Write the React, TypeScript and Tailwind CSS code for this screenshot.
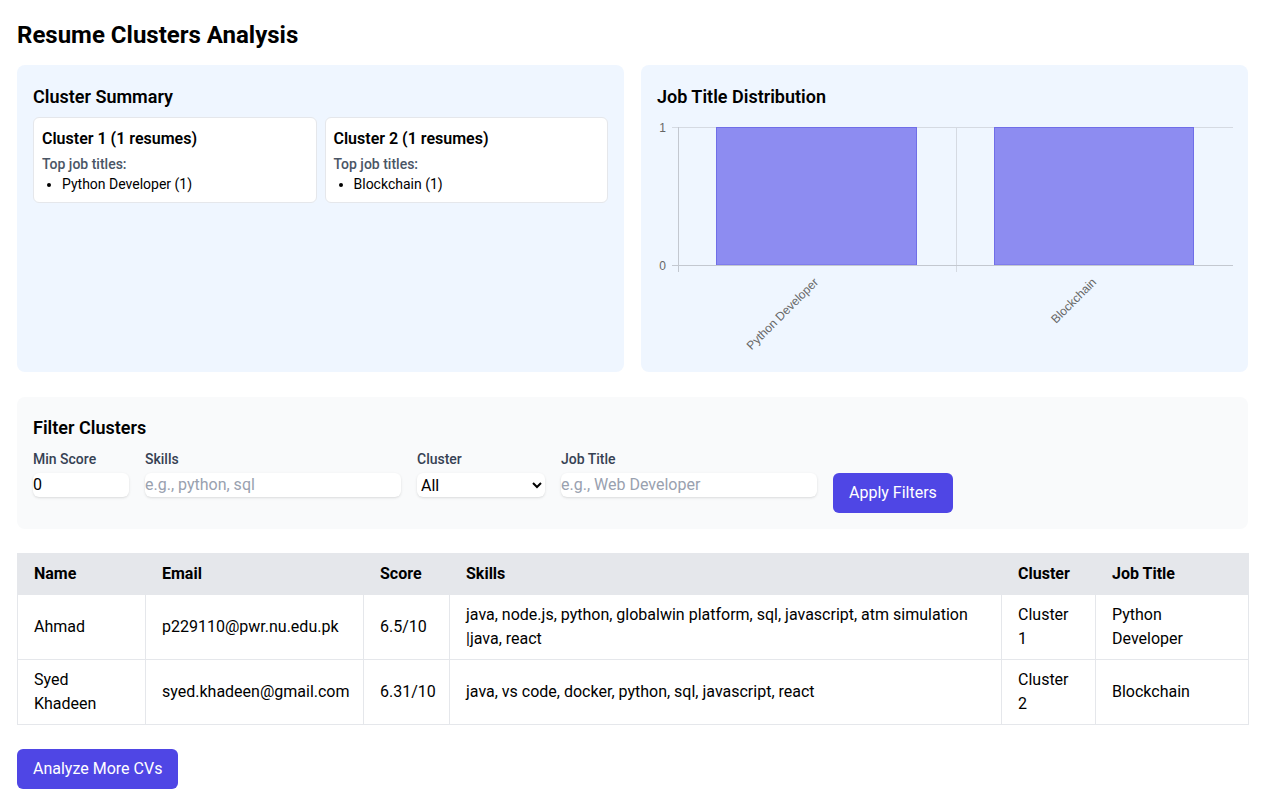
import React from "react";

const font = { fontFamily: "Roboto, 'Noto Sans', sans-serif" };

function Chart() {
  const grid = "#d5dae2";
  const axis = "#c3c8d0";
  return (
    <svg width="576" height="239" viewBox="0 0 576 239" className="block">
      <line x1="15" y1="10.5" x2="576" y2="10.5" stroke={grid} strokeWidth="1" />
      <line x1="299.5" y1="10" x2="299.5" y2="155" stroke={grid} strokeWidth="1" />
      <rect x="59.5" y="10.5" width="200" height="137.5" fill="rgba(100,96,235,0.7)" stroke="rgb(112,110,232)" strokeWidth="1" />
      <rect x="337.5" y="10.5" width="199" height="137.5" fill="rgba(100,96,235,0.7)" stroke="rgb(112,110,232)" strokeWidth="1" />
      <line x1="21.5" y1="10" x2="21.5" y2="155" stroke={axis} strokeWidth="1" />
      <line x1="15" y1="148.5" x2="576" y2="148.5" stroke={axis} strokeWidth="1" />
      <text x="9" y="14.5" textAnchor="end" fontSize="12" fill="#666" fontFamily="'Liberation Sans', Arial, sans-serif">1</text>
      <text x="9" y="152.5" textAnchor="end" fontSize="12" fill="#666" fontFamily="'Liberation Sans', Arial, sans-serif">0</text>
      <text x="162" y="166" textAnchor="end" fontSize="12" fill="#666" fontFamily="'Liberation Sans', Arial, sans-serif" transform="rotate(-45 162 166)">Python Developer</text>
      <text x="440" y="166" textAnchor="end" fontSize="12" fill="#666" fontFamily="'Liberation Sans', Arial, sans-serif" transform="rotate(-45 440 166)">Blockchain</text>
    </svg>
  );
}

const rows = [
  {
    name: "Ahmad",
    email: "p229110@pwr.nu.edu.pk",
    score: "6.5/10",
    skills: "java, node.js, python, globalwin platform, sql, javascript, atm simulation |java, react",
    cluster: "Cluster 1",
    job: "Python Developer",
  },
  {
    name: "Syed Khadeen",
    email: "syed.khadeen@gmail.com",
    score: "6.31/10",
    skills: "java, vs code, docker, python, sql, javascript, react",
    cluster: "Cluster 2",
    job: "Blockchain",
  },
];

export default function App() {
  return (
    <div className="min-h-screen bg-white text-black pl-[17px] pr-[23px] pt-[19px] pb-6" style={font}>
      <h1 className="text-2xl font-bold leading-8 mb-[14px]">Resume Clusters Analysis</h1>

      <div className="grid grid-cols-2 gap-[17px] mb-[25px]">
        <div className="bg-blue-50 rounded-lg p-4">
          <h2 className="text-lg font-semibold leading-7 pt-[2px] mb-[6px]">Cluster Summary</h2>
          <div className="grid grid-cols-2 gap-2">
            {[
              { t: "Cluster 1 (1 resumes)", j: "Python Developer (1)" },
              { t: "Cluster 2 (1 resumes)", j: "Blockchain (1)" },
            ].map((c) => (
              <div key={c.t} className="bg-white border border-gray-200 rounded-md p-2">
                <h3 className="text-base font-semibold leading-6 pt-px mb-[3px]">{c.t}</h3>
                <p className="text-sm font-medium text-gray-600 leading-5">Top job titles:</p>
                <ul className="list-disc pl-5 text-sm leading-5">
                  <li>{c.j}</li>
                </ul>
              </div>
            ))}
          </div>
        </div>
        <div className="bg-blue-50 rounded-lg p-4">
          <h2 className="text-lg font-semibold leading-7 pt-[2px] mb-[6px]">Job Title Distribution</h2>
          <div className="h-[239px]">
            <Chart />
          </div>
        </div>
      </div>

      <div className="bg-gray-50 rounded-lg p-4 mb-6">
        <h2 className="text-lg font-semibold leading-7 pt-px mb-[7px]">Filter Clusters</h2>
        <div className="flex items-start gap-4">
          <div className="flex flex-col">
            <label className="text-sm font-medium text-gray-700 leading-5 mb-1">Min Score</label>
            <input
              type="number"
              defaultValue={0}
              className="w-24 h-6 bg-white rounded-md shadow-sm text-base leading-6 outline-none"
            />
          </div>
          <div className="flex flex-col">
            <label className="text-sm font-medium text-gray-700 leading-5 mb-1">Skills</label>
            <input
              type="text"
              placeholder="e.g., python, sql"
              className="w-64 h-6 bg-white rounded-md shadow-sm text-base leading-6 outline-none placeholder:text-gray-400"
            />
          </div>
          <div className="flex flex-col">
            <label className="text-sm font-medium text-gray-700 leading-5 mb-1">Cluster</label>
            <select className="w-32 h-6 bg-white rounded-md shadow-sm text-base leading-6 outline-none">
              <option>All</option>
              <option>Cluster 1</option>
              <option>Cluster 2</option>
            </select>
          </div>
          <div className="flex flex-col">
            <label className="text-sm font-medium text-gray-700 leading-5 mb-1">Job Title</label>
            <input
              type="text"
              placeholder="e.g., Web Developer"
              className="w-64 h-6 bg-white rounded-md shadow-sm text-base leading-6 outline-none placeholder:text-gray-400"
            />
          </div>
          <button className="mt-6 bg-[#4f46e5] text-white rounded-md px-4 py-2 text-base leading-6">
            Apply Filters
          </button>
        </div>
      </div>

      <table className="w-full table-fixed border-collapse text-base leading-6">
        <colgroup>
          <col style={{ width: 128 }} />
          <col style={{ width: 218 }} />
          <col style={{ width: 86 }} />
          <col style={{ width: 552 }} />
          <col style={{ width: 94 }} />
          <col style={{ width: 153 }} />
        </colgroup>
        <thead>
          <tr className="bg-gray-200">
            {["Name", "Email", "Score", "Skills", "Cluster", "Job Title"].map((h) => (
              <th key={h} className="border border-gray-200 px-4 py-2 text-left font-bold">
                {h}
              </th>
            ))}
          </tr>
        </thead>
        <tbody>
          {rows.map((r) => (
            <tr key={r.email}>
              <td className="border border-gray-200 px-4 py-2">{r.name}</td>
              <td className="border border-gray-200 px-4 py-2">{r.email}</td>
              <td className="border border-gray-200 px-4 py-2">{r.score}</td>
              <td className="border border-gray-200 px-4 py-2">{r.skills}</td>
              <td className="border border-gray-200 px-4 py-2">{r.cluster}</td>
              <td className="border border-gray-200 px-4 py-2">{r.job}</td>
            </tr>
          ))}
        </tbody>
      </table>

      <button className="mt-6 bg-[#4f46e5] text-white rounded-md px-4 py-2 text-base leading-6">
        Analyze More CVs
      </button>
    </div>
  );
}
